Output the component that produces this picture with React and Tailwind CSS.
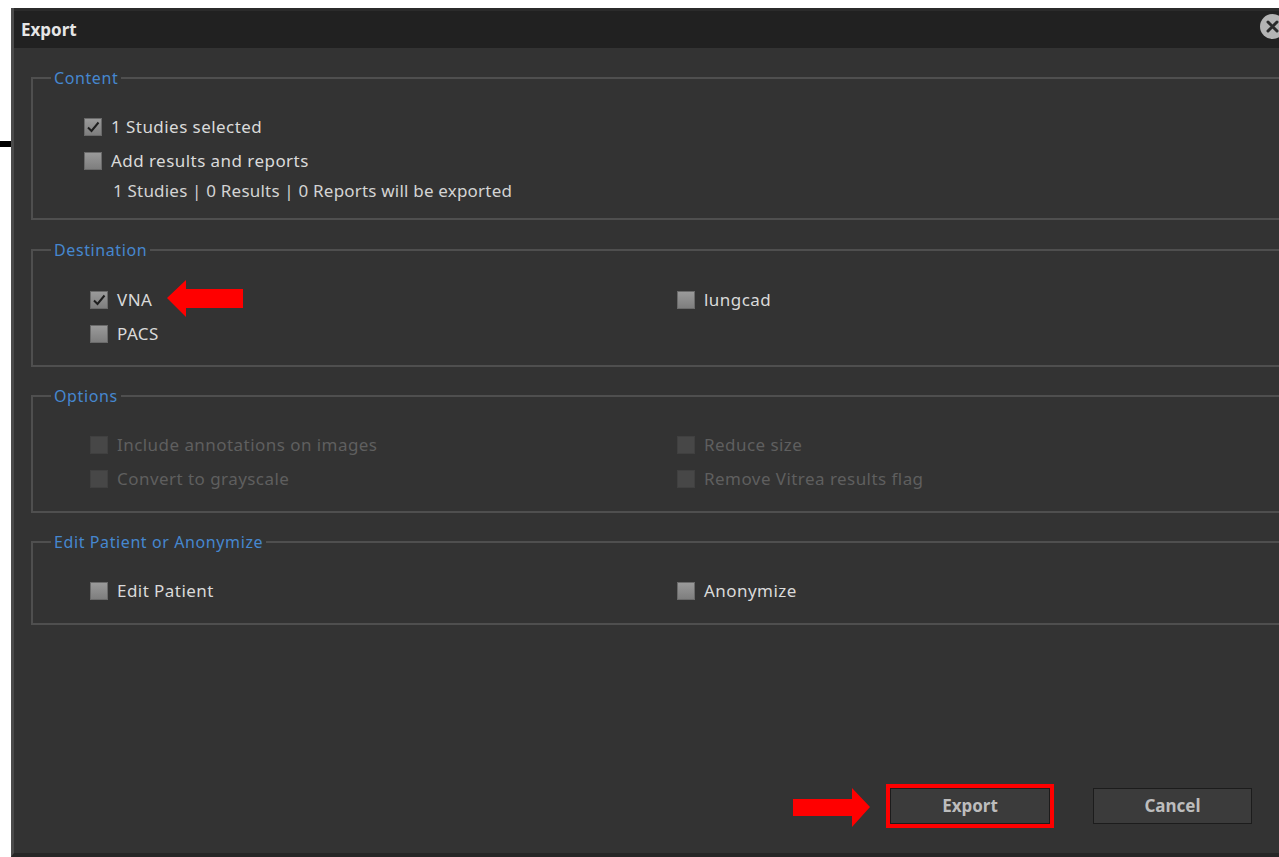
import React from 'react';

const font = { fontFamily: '"Noto Sans", "Open Sans", sans-serif' };

const Check = ({ checked, disabled }) => (
    <span
        className={`w-[18px] h-[18px] shrink-0 flex items-center justify-center border ${
            disabled
                ? 'bg-[#474747] border-[#404040]'
                : 'bg-gradient-to-b from-[#9a9a9a] to-[#7e7e7e] border-[#6a6a6a]'
        }`}
    >
        {checked && (
            <svg width="14" height="14" viewBox="0 0 14 14">
                <path d="M2 7.5 L5.5 11 L12.5 2.5" fill="none" stroke="#1e1e1e" strokeWidth="2" />
            </svg>
        )}
    </span>
);

const Option = ({ label, checked, disabled }) => (
    <label className="h-[34px] flex items-center gap-[9px]">
        <Check checked={checked} disabled={disabled} />
        <span className={`text-[17px] tracking-[0.45px] ${disabled ? 'text-[#5f5f5f]' : 'text-[#dadada]'}`}>{label}</span>
    </label>
);

const Group = ({ title, className = '', children }) => (
    <fieldset className={`ml-[17px] border-2 border-r-0 border-[#4f4f4f] ${className}`}>
        <legend className="ml-[18px] px-[3px] text-[16px] leading-[20px] tracking-[0.6px] text-[#4687cf]">{title}</legend>
        {children}
    </fieldset>
);

const LeftArrow = () => (
    <svg className="absolute left-[167px] top-[280px]" width="77" height="38" viewBox="0 0 77 38">
        <polygon points="0,18 19,0 19,9 76,9 76,28 19,28 19,37" fill="#ff0000" />
    </svg>
);

const RightArrow = () => (
    <svg className="absolute left-[793px] top-[788px]" width="78" height="39" viewBox="0 0 78 39">
        <polygon points="0,11 59,11 59,0 77,19 59,39 59,28 0,28" fill="#ff0000" />
    </svg>
);

export default function App() {
    return (
        <div className="relative w-[1279px] h-[857px] bg-white overflow-hidden pl-[11px] pt-[8px]" style={font}>
            {/* stray line from the window behind */}
            <div className="absolute left-0 top-[141px] w-[11px] h-[6px] bg-black" />

            <div className="h-[849px] flex flex-col bg-[#333333] border-l-[3px] border-b-4 border-l-[#4b4b4b] border-b-[#262626]">
                {/* title bar */}
                <div className="h-[40px] shrink-0 flex items-center justify-between pl-[7px] bg-[#212121] border-t-[3px] border-[#2b2b2b]">
                    <span className="text-[17px] font-bold text-[#e6e6e6]">Export</span>
                    <span className="-mr-[6px] -mt-[6px] w-[25px] h-[25px] rounded-full bg-[#b4b4b4] flex items-center justify-center">
                        <svg width="13" height="13" viewBox="0 0 13 13">
                            <path d="M2 2 L11 11 M11 2 L2 11" stroke="#2a2a2a" strokeWidth="3" strokeLinecap="round" />
                        </svg>
                    </span>
                </div>

                <div className="flex-1 flex flex-col pt-[20px]">
                    <Group title="Content">
                        <div className="pl-[51px] pt-[22px] pb-[14px] flex flex-col">
                            <Option label="1 Studies selected" checked />
                            <Option label="Add results and reports" />
                            <div className="h-[26px] flex items-center pl-[29px] text-[17px] tracking-[0.2px] text-[#d4d4d4]">
                                1 Studies | 0 Results | 0 Reports will be exported
                            </div>
                        </div>
                    </Group>

                    <Group title="Destination" className="mt-[20px]">
                        <div className="pl-[57px] pt-[23px] pb-[14px] grid grid-cols-[587px_1fr]">
                            <Option label="VNA" checked />
                            <Option label="lungcad" />
                            <Option label="PACS" />
                        </div>
                    </Group>

                    <Group title="Options" className="mt-[19px]">
                        <div className="pl-[57px] pt-[22px] pb-[15px] grid grid-cols-[587px_1fr]">
                            <Option label="Include annotations on images" disabled />
                            <Option label="Reduce size" disabled />
                            <Option label="Convert to grayscale" disabled />
                            <Option label="Remove Vitrea results flag" disabled />
                        </div>
                    </Group>

                    <Group title="Edit Patient or Anonymize" className="mt-[19px]">
                        <div className="pl-[57px] pt-[22px] pb-[15px] grid grid-cols-[587px_1fr]">
                            <Option label="Edit Patient" />
                            <Option label="Anonymize" />
                        </div>
                    </Group>

                    <div className="mt-auto mb-[29px] flex justify-end items-center gap-[43px] pr-[27px]">
                        <button className="w-[160px] h-[36px] bg-[#3b3b3b] border border-[#1c1c1c] text-[17px] font-bold text-[#bdbdbd] outline-4 outline-[#ff0000]">
                            Export
                        </button>
                        <button className="w-[159px] h-[36px] bg-[#3b3b3b] border border-[#1c1c1c] text-[17px] font-bold text-[#bdbdbd]">
                            Cancel
                        </button>
                    </div>
                </div>
            </div>

            <LeftArrow />
            <RightArrow />
        </div>
    );
}
